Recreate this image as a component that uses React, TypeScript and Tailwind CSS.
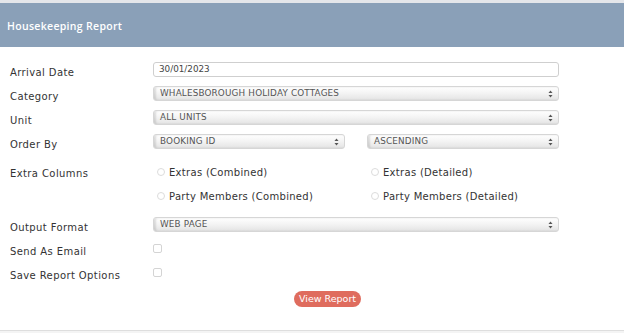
import React from 'react';

const font = { fontFamily: '"DejaVu Sans", "Open Sans", sans-serif' };

const Arrows = () => (
  <svg width="5" height="8" viewBox="0 0 5 8" className="shrink-0">
    <path d="M2.5 0.5 L4.5 3 L0.5 3 Z" fill="#555" />
    <path d="M2.5 7.5 L4.5 5 L0.5 5 Z" fill="#555" />
  </svg>
);

const Select = ({ value, className = '' }: { value: string; className?: string }) => (
  <div
    className={`h-[15px] flex items-center justify-between pl-[6px] pr-[5px] rounded-[3px] border border-[#d6d6d6] bg-gradient-to-b from-white via-[#f3f3f3] to-[#e4e4e4] shadow-[inset_2px_0_2px_rgba(0,0,0,0.12)] ${className}`}
  >
    <span className="text-[8.8px] text-[#555] tracking-[0.02em] leading-none">{value}</span>
    <Arrows />
  </div>
);

const Row = ({ label, children, className = '' }: { label?: string; children: React.ReactNode; className?: string }) => (
  <div className={`flex items-center h-6 ${className}`}>
    <div className="w-[153px] shrink-0 pl-[10px] pt-[3px] text-[10px] text-[#333] tracking-[0.04em]">{label}</div>
    <div className="flex-1 flex items-center">{children}</div>
  </div>
);

const Radio = ({ label }: { label: string }) => (
  <div className="flex items-center gap-[4px] w-[214px]">
    <span className="w-[8px] h-[8px] rounded-full border border-[#dcdcdc] bg-white ml-[4px]" />
    <span className="text-[10px] text-[#333] tracking-[0.03em]">{label}</span>
  </div>
);

const Check = () => <span className="w-[9px] h-[9px] rounded-[2px] border border-[#d4d4d4] bg-white -mt-[4px]" />;

export default function App() {
  return (
    <div className="w-[624px] h-[333px] bg-white flex flex-col border-t-[3px] border-[#e4e6ea]" style={font}>
      <div className="h-[44px] bg-[#8aa0b8] flex items-center pl-[7px] pt-[3px] shrink-0">
        <span
          className="text-white text-[10.5px] font-semibold tracking-[0.03em]"
          style={{ fontFamily: '"Open Sans", "DejaVu Sans", sans-serif' }}
        >
          Housekeeping Report
        </span>
      </div>
      <div className="flex-1 flex flex-col pt-[12px] pr-[65px]">
        <Row label="Arrival Date">
          <div className="w-full h-[15px] -mt-[4px] rounded-[3px] border border-[#cfcfcf] bg-white flex items-center pl-[5px]">
            <span className="text-[8.8px] text-[#444] leading-none">30/01/2023</span>
          </div>
        </Row>
        <Row label="Category">
          <Select value="WHALESBOROUGH HOLIDAY COTTAGES" className="w-full -mt-[3px]" />
        </Row>
        <Row label="Unit">
          <Select value="ALL UNITS" className="w-full -mt-[3px]" />
        </Row>
        <Row label="Order By">
          <div className="w-full flex justify-between -mt-[3px]">
            <Select value="BOOKING ID" className="w-[192px]" />
            <Select value="ASCENDING" className="w-[192px]" />
          </div>
        </Row>
        <Row label="Extra Columns" className="mt-[5px]">
          <Radio label="Extras (Combined)" />
          <Radio label="Extras (Detailed)" />
        </Row>
        <Row>
          <Radio label="Party Members (Combined)" />
          <Radio label="Party Members (Detailed)" />
        </Row>
        <Row label="Output Format" className="mt-[6px]">
          <Select value="WEB PAGE" className="w-full -mt-[3px]" />
        </Row>
        <Row label="Send As Email">
          <Check />
        </Row>
        <Row label="Save Report Options">
          <Check />
        </Row>
        <div className="flex justify-center pl-[96px] mt-[5px]">
          <button className="h-[16px] px-[5px] rounded-full bg-[#df6c5e] text-white text-[9.5px] leading-none">
            View Report
          </button>
        </div>
      </div>
      <div className="h-[3px] border-t border-[#dedede] bg-[#f4f4f4] shrink-0" />
    </div>
  );
}
